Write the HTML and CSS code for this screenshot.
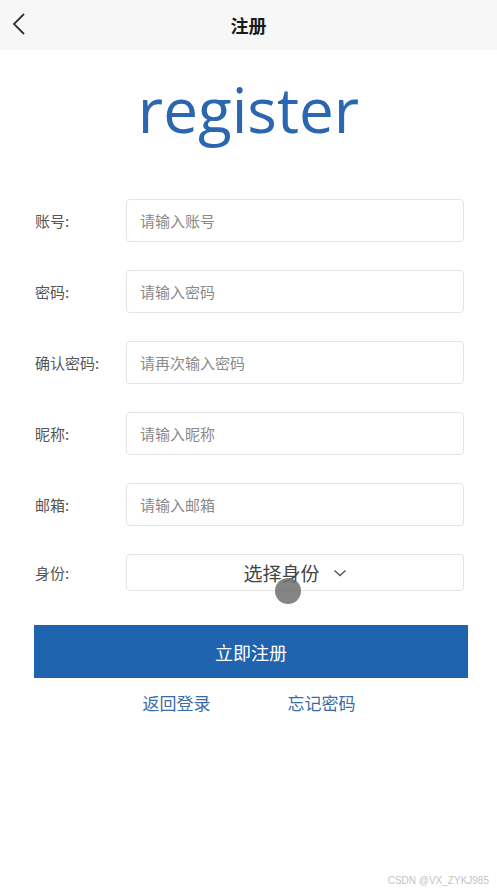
FILE: index.html
```html
<!DOCTYPE html>
<html lang="zh">
<head>
<meta charset="utf-8">
<title>注册</title>
<link rel="stylesheet" href="styles.css">
</head>
<body>
<header class="topbar">
  <svg class="back" width="16" height="24" viewBox="0 0 16 24"><path d="M13 2 L3 12 L13 22" fill="none" stroke="#333" stroke-width="1.8"/></svg>
  <h1 class="title">注册</h1>
</header>
<div class="logo">register</div>
<form class="form">
  <div class="row"><label class="label">账号:</label><div class="field">请输入账号</div></div>
  <div class="row"><label class="label">密码:</label><div class="field">请输入密码</div></div>
  <div class="row"><label class="label">确认密码:</label><div class="field">请再次输入密码</div></div>
  <div class="row"><label class="label">昵称:</label><div class="field">请输入昵称</div></div>
  <div class="row"><label class="label">邮箱:</label><div class="field">请输入邮箱</div></div>
  <div class="row row-select"><label class="label">身份:</label>
    <div class="select"><span>选择身份</span>
      <svg width="14" height="10" viewBox="0 0 14 10"><path d="M1.5 2.5 L7 7.5 L12.5 2.5" fill="none" stroke="#555" stroke-width="1.4"/></svg>
      <span class="touch"></span>
    </div>
  </div>
  <div class="submit">立即注册</div>
  <div class="links"><a class="link">返回登录</a><a class="link">忘记密码</a></div>
</form>
<div class="watermark">CSDN @VX_ZYKJ985</div>
</body>
</html>
```
FILE: styles.css
```css
html, body {
  margin: 0;
  padding: 0;
  background: #fff;
  font-family: "Noto Sans CJK SC", "Noto Sans", sans-serif;
}
body {
  width: 497px;
  height: 892px;
  position: relative;
  overflow: hidden;
}
.topbar {
  height: 50px;
  background: #f7f7f7;
  display: flex;
  align-items: center;
  justify-content: center;
  position: relative;
}
.back {
  position: absolute;
  left: 11px;
  top: 12px;
}
.title {
  margin: 0;
  font-size: 18px;
  font-weight: 700;
  color: #1a1a1a;
}
.logo {
  text-align: center;
  font-family: "Open Sans", sans-serif;
  font-size: 62px;
  font-weight: 500;
  line-height: 1;
  color: #2a67b0;
  margin-top: 28px;
  height: 121px;
}
.form {
  padding: 0 33px 0 34px;
  display: flex;
  flex-direction: column;
}
.row {
  display: flex;
  align-items: center;
  height: 43px;
  margin-bottom: 28px;
}
.label {
  width: 91px;
  padding-left: 1px;
  font-size: 15px;
  color: #555;
}
.field {
  flex: 1;
  height: 41px;
  border: 1px solid #e4e4e4;
  border-radius: 4px;
  display: flex;
  align-items: center;
  padding-left: 13px;
  font-size: 15px;
  color: #8a8a8a;
}
.row-select {
  height: 37px;
  margin-bottom: 34px;
}
.select {
  flex: 1;
  height: 35px;
  border: 1px solid #e4e4e4;
  border-radius: 4px;
  display: flex;
  align-items: center;
  justify-content: center;
  gap: 13px;
  font-size: 19px;
  color: #444;
  position: relative;
}
.touch {
  position: absolute;
  left: 148px;
  top: 23px;
  width: 26px;
  height: 26px;
  border-radius: 50%;
  background: rgba(110, 110, 110, 0.85);
}
.submit {
  height: 53px;
  background: #2064b0;
  color: #fff;
  font-size: 18px;
  display: flex;
  align-items: center;
  justify-content: center;
  margin-right: -4px;
}
.links {
  display: flex;
  justify-content: center;
  gap: 77px;
  margin-top: 12px;
}
.link {
  font-size: 17px;
  color: #3b6ca8;
}
.watermark {
  position: absolute;
  right: 8px;
  bottom: 6px;
  font-family: "Liberation Sans", sans-serif;
  font-size: 10px;
  color: #c4c4c4;
}
```
